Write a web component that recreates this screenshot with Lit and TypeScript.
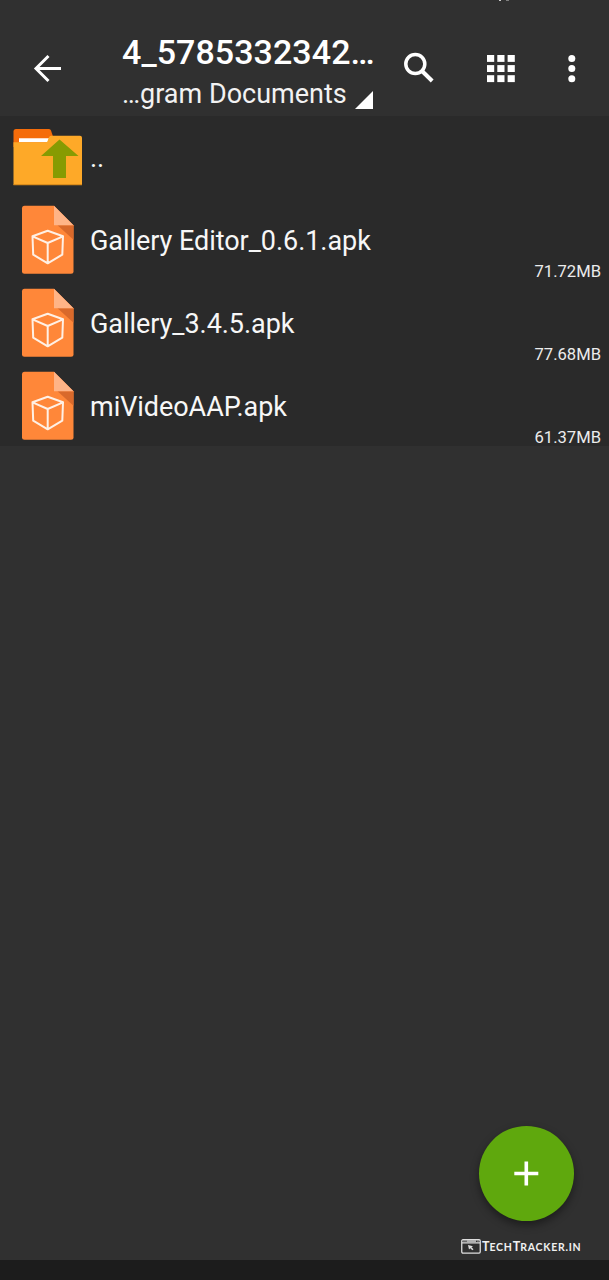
import { LitElement, html, css, svg } from "lit";
import { customElement, property } from "lit/decorators.js";

@customElement("file-row")
class FileRow extends LitElement {
  @property() name = "";
  @property() size = "";
  @property() kind = "apk";

  static styles = css`
    :host { display: flex; height: 83px; box-sizing: border-box; padding-right: 8px; color: #f7f7f7; }
    .icon { width: 90px; height: 83px; flex: none; display: block; }
    .name { font-size: 27px; line-height: 32px; letter-spacing: -.05px; padding-top: 26px; flex: 1; white-space: nowrap; }
    .size { font-size: 16.600px; line-height: 20px; align-self: flex-end; color: #ececec; }
  `;

  folder() {
    return svg`
      <path d="M13.500 31V15.500a2.500 2.500 0 0 1 2.500-2.500h33q1.500 0 2 1.500l2.500 7.500v9z" fill="#f56c0a"/>
      <path d="M19 22.200h30l-1 4h-29z" fill="#fff"/>
      <path d="M13.500 26.300h32.500q1.200 0 1.700-1.500l1.300-3.500q.5-1.500 2-1.500h29q2 0 2 2v47h-68.500z" fill="#fea928"/>
      <path d="M13.500 68h68.500v1.200h-68.500z" fill="#dc8d1b"/>
      <path d="M59.500 23.500L78.500 40H66v22H53V40H41z" fill="#879b02"/>`;
  }

  apk() {
    return svg`
      <g transform="translate(0 -0.7)">
        <path d="M22 10a2.500 2.500 0 0 1 2.500-2.500H54L73.500 27v46a2.500 2.500 0 0 1-2.500 2.500H24.500A2.500 2.500 0 0 1 22 73z" fill="#ff8739"/>
        <path d="M57.500 27h16v14.500z" fill="#d9692b"/>
        <path d="M54 7.500L73.500 27H54z" fill="#ffb487"/>
        <path d="M47.700 32.500l15.300 5.500-.7 18.300-14.600 8.700-14.500-8.700L32.500 38zM32.500 38l15.200 6.700L63 38M47.700 44.700V65" fill="none" stroke="#fff0e5" stroke-width="2" stroke-linejoin="round"/>
      </g>`;
  }

  render() {
    return html`
      <svg class="icon" viewBox="0 0 90 83">${this.kind === "folder" ? this.folder() : this.apk()}</svg>
      <span class="name">${this.name}</span>
      ${this.size ? html`<span class="size">${this.size}</span>` : ""}`;
  }
}

@customElement("app-root")
class AppRoot extends LitElement {
  static styles = css`
    :host { display: flex; flex-direction: column; position: relative; width: 609px; height: 1280px; overflow: hidden; background: #303030; font-family: Roboto, sans-serif; color: #fff; }
    .bar { height: 116px; flex: none; display: flex; box-sizing: border-box; background: #303030; }
    .back { width: 122px; height: 116px; flex: none; }
    .titles { width: 252px; flex: none; padding-top: 32px; white-space: nowrap; }
    .title { font-size: 34px; font-weight: 500; line-height: 40px; letter-spacing: .06px; }
    .sub { display: flex; font-size: 27px; line-height: 32px; padding-top: 6px; color: #f2f2f2; }
    .corner { width: 18px; height: 18px; margin: 13px 0 0 8px; flex: none; }
    .actions { width: 235px; height: 116px; flex: none; }
    .list { background: #2a2a2a; height: 330px; flex: none; }
    .grow { flex: 1; }
    .nav { height: 20px; background: #1c1c1c; flex: none; }
    .fab { position: absolute; left: 479px; top: 1126px; width: 95px; height: 95px; border-radius: 50%; background: #5fa80d; box-shadow: 0 4px 8px rgba(0,0,0,.42); }
    .fab svg { display: block; width: 95px; height: 95px; }
    .mark { position: absolute; left: 461px; top: 1238px; display: flex; align-items: center; height: 16px; color: #f0f0f0; }
    .mark svg { width: 20px; height: 15px; flex: none; }
    .brand { font-family: Lato, sans-serif; font-weight: 700; font-size: 12.500px; line-height: 16px; padding: 2px 0 0 1px; white-space: nowrap; }
    .small { font-size: 10.500px; letter-spacing: .75px; }
  `;

  render() {
    return html`
      <header class="bar">
        <svg class="back" viewBox="0 0 122 116"><path d="M61 68.500H36M48.500 56L36 68.500 48.500 81" fill="none" stroke="#fff" stroke-width="3"/></svg>
        <div class="titles">
          <div class="title">4_5785332342…</div>
          <div class="sub"><span>…gram Documents</span><svg class="corner" viewBox="0 0 18 18"><path d="M18 0v18H0z" fill="#fff"/></svg></div>
        </div>
        <svg class="actions" viewBox="374 0 235 116" fill="#fff">
          <circle cx="415.300" cy="64" r="9.500" fill="none" stroke="#fff" stroke-width="3.500"/>
          <path d="M421.500 70.500L432.200 81" stroke="#fff" stroke-width="4"/>
          ${[487, 497.3, 507.6].map((x) => [55, 65.1, 75.2].map((y) => svg`<rect x=${x} y=${y} width="7.200" height="6.900"/>`))}
          <circle cx="571.800" cy="58.500" r="3.500"/><circle cx="571.800" cy="68.500" r="3.500"/><circle cx="571.800" cy="78.700" r="3.500"/>
          <path d="M499 0h2v1h-2zM506 0h3v.6h-3z" fill="#ccc"/>
        </svg>
      </header>
      <main class="list">
        <file-row kind="folder" name=".."></file-row>
        <file-row name="Gallery Editor_0.6.1.apk" size="71.72MB"></file-row>
        <file-row name="Gallery_3.4.5.apk" size="77.68MB"></file-row>
        <file-row name="miVideoAAP.apk" size="61.37MB"></file-row>
      </main>
      <div class="grow"></div>
      <div class="nav"></div>
      <div class="fab"><svg viewBox="0 0 95 95"><path d="M47.300 35.500v24M35.300 47.500h24" stroke="#fff" stroke-width="3.600"/></svg></div>
      <div class="mark">
        <svg viewBox="0 0 20 15"><rect x=".75" y=".75" width="18.500" height="13.300" rx="1.200" fill="none" stroke="#ddd" stroke-width="1.300"/><path d="M1 3.800h18M6 2.200h9" stroke="#ddd" stroke-width="1.200"/><path d="M2.500 2.200h1M4.500 2.200h1M16.500 2.200h1" stroke="#ddd"/><path d="M7 6l5 1.300-1.500 1 2 2-1.200 1-2-2-1.300 1.200z" fill="#ddd"/></svg>
        <span class="brand">T<span class="small">ECH</span>T<span class="small">RACKER.IN</span></span>
      </div>`;
  }
}
